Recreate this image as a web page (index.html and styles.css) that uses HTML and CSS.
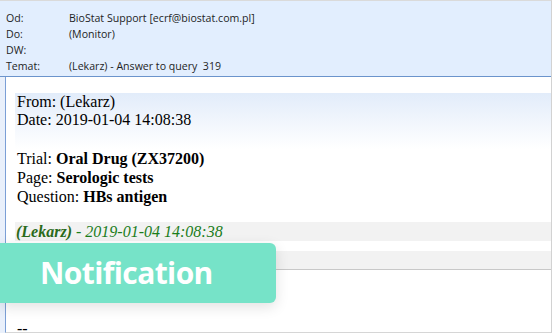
FILE: index.html
```html
<!DOCTYPE html>
<html lang="pl">
<head>
  <meta charset="utf-8">
  <title>Answer to query 319</title>
  <link rel="stylesheet" href="styles.css">
</head>
<body>
  <div class="window">
    <div class="head">
      <div class="row"><span class="lbl">Od:</span><span>BioStat Support [ecrf@biostat.com.pl]</span></div>
      <div class="row"><span class="lbl">Do:</span><span>(Monitor)</span></div>
      <div class="row"><span class="lbl">DW:</span><span></span></div>
      <div class="row"><span class="lbl">Temat:</span><span>(Lekarz) - Answer to query &nbsp;319</span></div>
    </div>
    <div class="frame">
      <div class="msg">
        <div class="meta">
          <p>From: (Lekarz)</p>
          <p>Date: 2019-01-04 14:08:38</p>
        </div>
        <div class="info">
          <p>Trial: <b>Oral Drug (ZX37200)</b></p>
          <p>Page: <b>Serologic tests</b></p>
          <p>Question: <b>HBs antigen</b></p>
        </div>
        <div class="reply"><b>(Lekarz)</b> - 2019-01-04 14:08:38</div>
        <div class="reply2"></div>
        <div class="sig">--</div>
      </div>
    </div>
    <div class="toast">Notification</div>
  </div>
</body>
</html>
```

FILE: styles.css
```css
html, body { margin: 0; padding: 0; }
body { width: 552px; height: 333px; overflow: hidden; background: #fff; }

.window {
    position: relative;
    height: 333px;
    box-sizing: border-box;
    border-top: 1px solid #dadada;
    border-right: 1px solid #d2d2d2;
    display: flex;
    flex-direction: column;
}

/* naglowek wiadomosci */
.head {
    background: #e2eefe;
    padding: 9px 0 2px 6px;
    border-bottom: 1px solid #6b94cc;
    font-family: "Open Sans", "Noto Sans", sans-serif;
    font-size: 10.6px;
    color: #1e1e1e;
}
.head .row { display: flex; height: 16px; line-height: 16px; }
.head .lbl { width: 63px; flex: none; }

.frame {
    flex: 1;
    min-height: 0;
    background: #e9f0fb;
    padding-left: 5px;
    display: flex;
}
.msg {
    flex: 1;
    overflow: hidden;
    background: #fff;
    border-left: 1px solid #7b9fd6;
    border-bottom: 1px solid #d6d6d6;
    padding: 16px 0 0 9px;
    font-family: "Liberation Serif", "Times New Roman", serif;
    font-size: 16px;
    color: #000;
}
.msg p { margin: 0; padding-left: 2px; }
.meta {
    background: linear-gradient(#e2ecfa, #fff 100%);
    padding-bottom: 20px;
}
.info p { line-height: 19px; }
.info { padding-bottom: 16px; }
.reply {
    background: #f2f2f2;
    color: #1b7d1b;
    font-style: italic;
    height: 19px;
    line-height: 19px;
    padding-left: 1px;
}
.reply b { color: #2a6a1a; }
.reply2 {
    margin-top: 10px;
    height: 18px;
    background: #f2f2f2;
    border-bottom: 1px solid #c8c8c8;
}
.sig { margin-top: 50px; padding-left: 2px; }

/* dymek powiadomienia */
.toast {
    position: absolute;
    left: 0;
    top: 242px;
    width: 276px;
    height: 60px;
    box-sizing: border-box;
    padding-left: 40px;
    background: #76e3c8;
    border-radius: 0 6px 6px 0;
    box-shadow: 0 4px 14px rgba(0, 0, 0, 0.12);
    color: #fff;
    font-family: "Open Sans", sans-serif;
    font-weight: 700;
    font-size: 30px;
    letter-spacing: -0.6px;
    line-height: 60px;
}
```
